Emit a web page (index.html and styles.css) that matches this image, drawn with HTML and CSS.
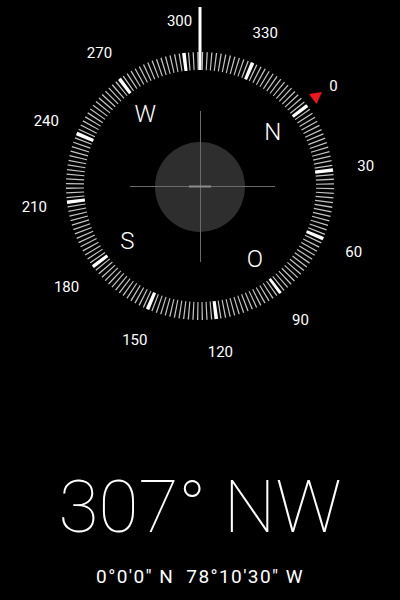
FILE: index.html
```html
<!DOCTYPE html>
<html lang="de">
<head>
  <meta charset="UTF-8">
  <title>Kompass</title>
  <link rel="stylesheet" href="styles.css">
</head>
<body>
  <main class="compass">
    <svg class="dial" width="400" height="372" viewBox="0 0 400 372">
      <!-- Ring, gedreht um die Richtung (307° -> +53°) -->
      <g transform="rotate(53 200 186)">
        <circle class="ticks" cx="200" cy="186" r="125"></circle>
        <circle class="ticks-major" cx="200" cy="186" r="125"></circle>
      </g>

      <line class="marker" x1="200" y1="7" x2="200" y2="70"></line>
      <polygon class="north" points="309,94 322,92 316.5,104"></polygon>

      <circle class="level" cx="200" cy="187" r="45"></circle>
      <line class="cross" x1="200.5" y1="111" x2="200.5" y2="262"></line>
      <line class="cross" x1="130" y1="186.5" x2="275" y2="186.5"></line>
      <line class="bubble" x1="189" y1="186.5" x2="211" y2="186.5"></line>

      <g class="degrees">
        <text x="333.4" y="90.9">0</text>
        <text x="365.7" y="171">30</text>
        <text x="353.7" y="256.6">60</text>
        <text x="300.5" y="324.8">90</text>
        <text x="220.4" y="357.1">120</text>
        <text x="134.8" y="345.1">150</text>
        <text x="66.6" y="291.9">180</text>
        <text x="34.3" y="211.8">210</text>
        <text x="46.3" y="126.2">240</text>
        <text x="99.5" y="58">270</text>
        <text x="179.6" y="25.7">300</text>
        <text x="265.2" y="37.7">330</text>
      </g>

      <g class="cardinals">
        <text x="272.7" y="139.8">N</text>
        <text x="254.8" y="267.3">O</text>
        <text x="127.3" y="249.4">S</text>
        <text x="145.2" y="121.9">W</text>
      </g>
    </svg>

    <div class="heading">307° NW</div>
    <div class="coords">0°0′0″ N  78°10′30″ W</div>
  </main>
</body>
</html>
```

FILE: styles.css
```css
body {
  margin: 0;
  background: #000;
  color: #fff;
  font-family: Roboto, 'Liberation Sans', sans-serif;
}

.compass {
  width: 400px;
  height: 600px;
  display: flex;
  flex-direction: column;
  align-items: center;
}

.dial {
  display: block;
}

.ticks {
  fill: none;
  stroke: #c4c4c4;
  stroke-width: 18;
  stroke-dasharray: 1.2 3.1633;
  stroke-dashoffset: 0.6;
}

.ticks-major {
  fill: none;
  stroke: #fff;
  stroke-width: 18;
  stroke-dasharray: 3.4 62.0518;
  stroke-dashoffset: 1.7;
}

.marker {
  stroke: #fff;
  stroke-width: 3;
}

.north {
  fill: #f0141e;
}

.level {
  fill: #2e2e2e;
}

.cross {
  stroke: #6a6a6a;
  stroke-width: 1;
}

.bubble {
  stroke: #8c8c8c;
  stroke-width: 2;
}

.degrees text {
  fill: #fff;
  font-size: 15px;
  text-anchor: middle;
}

.cardinals text {
  fill: #fff;
  font-size: 24px;
  font-weight: 300;
  text-anchor: middle;
}

.heading {
  margin-top: 99px;
  font-size: 73px;
  font-weight: 100;
  line-height: 1;
  white-space: nowrap;
}

.coords {
  margin-top: 23px;
  font-size: 19px;
  letter-spacing: 1.4px;
  line-height: 1;
  white-space: pre;
}
```
